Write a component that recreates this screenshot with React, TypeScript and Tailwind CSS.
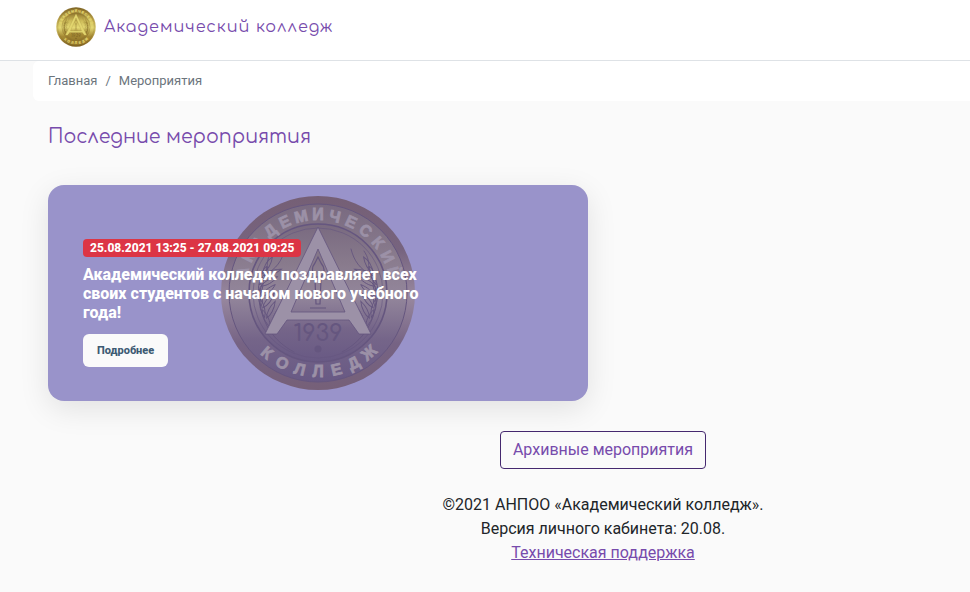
type Palette = {
  id: string
  rim: string[]
  field: string[]
  raised: string
  groove: string
}

const gold: Palette = {
  id: 'gold',
  rim: ['#7d6425', '#b39a45', '#d6c769', '#a38632', '#7c6022'],
  field: ['#90752d', '#cdbb58', '#e4d873', '#a68a34', '#93772c'],
  raised: '#e2d56e',
  groove: '#7d6425',
}

const violet: Palette = {
  id: 'violet',
  rim: ['#755f75', '#77647f', '#98889f', '#766384', '#766078'],
  field: ['#796a80', '#887a8c', '#93869b', '#756589', '#685984'],
  raised: '#9c91a7',
  groove: '#65567f',
}

const topLetters = 'АКАДЕМИЧЕСКИЙ'.split('')
const bottomLetters = 'КОЛЛЕДЖ'.split('')
const stops = ['0%', '28%', '52%', '76%', '100%']
const leaves = [0, 1, 2, 3, 4, 5]

function Branch({ color }: { color: string }) {
  return (
    <g fill="none" stroke={color} strokeWidth="0.9" strokeLinecap="round">
      <path d="M-24 59C-45 48-58 28-58 5C-58-4-56-12-52-19M-52-19C-42-24-36-32-33-44M-50-22C-52-30-50-36-46-42" />
      {leaves.map((i) => (
        <g key={i} transform={`rotate(${10 + i * 11} 0 0)`}>
          <path d="M-41 42C-47 38-51 33-52 26C-46 30-42 36-41 42Z" />
          <path d="M-39 42C-41 36-40 29-37 23C-35 30-36 38-39 42Z" />
        </g>
      ))}
    </g>
  )
}

function Medal({ palette, className }: { palette: Palette; className: string }) {
  const { id, rim, field, raised, groove } = palette
  return (
    <svg viewBox="-98 -98 196 196" className={className} aria-hidden="true">
      <defs>
        <linearGradient id={`${id}-rim`} x1="0" y1="0" x2="0" y2="1">
          {rim.map((c, i) => (
            <stop key={i} offset={stops[i]} stopColor={c} />
          ))}
        </linearGradient>
        <linearGradient id={`${id}-field`} x1="0" y1="0" x2="0" y2="1">
          {field.map((c, i) => (
            <stop key={i} offset={stops[i]} stopColor={c} />
          ))}
        </linearGradient>
      </defs>
      <circle r="97" fill={`url(#${id}-rim)`} />
      <circle r="89" fill={`url(#${id}-field)`} stroke={groove} strokeWidth="1" />
      <circle r="69" fill={`url(#${id}-field)`} stroke={groove} strokeWidth="1.6" />
      <circle r="65" fill="none" stroke={groove} strokeWidth="0.6" />
      <Branch color={groove} />
      <g transform="scale(-1 1)">
        <Branch color={groove} />
      </g>
      <g fill="none" stroke={groove} strokeWidth="1.2">
        <path d="M-3-30C-8-24-5-19-3-16H3C6-19 8-24 3-30L0-36Z" />
        <path d="M-3-14L-2 11H2L3-14ZM-8 15H8" />
      </g>
      <path
        fillRule="evenodd"
        d="M0-66L53 41H41L31 27H-31L-41 41H-53ZM0-44L-27 19H27Z"
        fill={raised}
        stroke={groove}
        strokeWidth="0.8"
      />
      <text y="48" textAnchor="middle" fill={groove} className="font-[Comfortaa,sans-serif] text-[23px] font-semibold">
        1939
      </text>
      <circle cy="56" r="3.5" fill={groove} />
      <g fill={raised} stroke={raised} strokeWidth="0.8" textAnchor="middle" className="font-['Liberation_Sans',sans-serif] text-[16px] font-bold">
        {topLetters.map((ch, i) => (
          <text key={i} y="-73" transform={`rotate(${(i - 6) * 12.5})`}>
            {ch}
          </text>
        ))}
        {bottomLetters.map((ch, i) => (
          <text key={i} y="84" transform={`rotate(${(3 - i) * 13.5})`}>
            {ch}
          </text>
        ))}
      </g>
    </svg>
  )
}

export default function App() {
  return (
    <div className="min-h-screen overflow-x-clip bg-[#fafafa] font-[Roboto,sans-serif] text-base text-[#212529]">
      <header className="border-b border-[#dee2e6] bg-white px-14 pt-[7px] pb-[13px]">
        <a href="#" className="flex w-fit items-center gap-2 text-[#774bac]">
          <Medal palette={gold} className="size-10" />
          <span className="font-[Comfortaa,sans-serif] text-base tracking-[1px]">Академический колледж</span>
        </a>
      </header>

      <div className="ml-[33px] min-w-[1140px]">
        <nav aria-label="breadcrumb" className="rounded-md bg-white px-[15px] py-2.5">
          <ol className="flex gap-2 text-[13px] leading-5 text-[#6c757d]">
            <li>
              <a href="#">Главная</a>
            </li>
            <li aria-hidden="true">/</li>
            <li>Мероприятия</li>
          </ol>
        </nav>

        <main className="px-[15px] pt-5">
          <h1 className="font-[Comfortaa,sans-serif] text-[19px] leading-8 text-[#774bac]">
            Последние мероприятия
          </h1>

          <article className="relative mt-8 w-[540px] rounded-2xl bg-[#9993ca] px-[35px] pt-[54px] pb-[34px] text-white shadow-[0_8px_30px_rgba(0,0,0,0.1)]">
            <div className="absolute inset-0 flex items-center justify-center">
              <Medal palette={violet} className="size-[196px]" />
            </div>
            <div className="relative flex max-w-[350px] flex-col items-start">
              <span className="rounded bg-[#dc3545] px-[7px] text-xs leading-[18px] font-extrabold">
                25.08.2021 13:25 - 27.08.2021 09:25
              </span>
              <h2 className="mt-2 text-base leading-[19px] font-extrabold">
                Академический колледж поздравляет всех своих студентов с началом нового учебного года!
              </h2>
              <button className="mt-3 h-[33px] rounded-md bg-[#fafafa] px-3.5 pt-0.5 text-[11px] font-extrabold text-[#3d5a73]">
                Подробнее
              </button>
            </div>
          </article>

          <div className="mt-[30px] flex justify-center">
            <button className="rounded border border-[#45286f] px-3 py-1.5 leading-6 text-[#774bac]">
              Архивные мероприятия
            </button>
          </div>
        </main>

        <footer className="pt-6 pb-7 text-center leading-6">
          <p>©2021 АНПОО «Академический колледж».</p>
          <p>Версия личного кабинета: 20.08.</p>
          <a href="#" className="text-[#774bac] underline">
            Техническая поддержка
          </a>
        </footer>
      </div>
    </div>
  )
}
